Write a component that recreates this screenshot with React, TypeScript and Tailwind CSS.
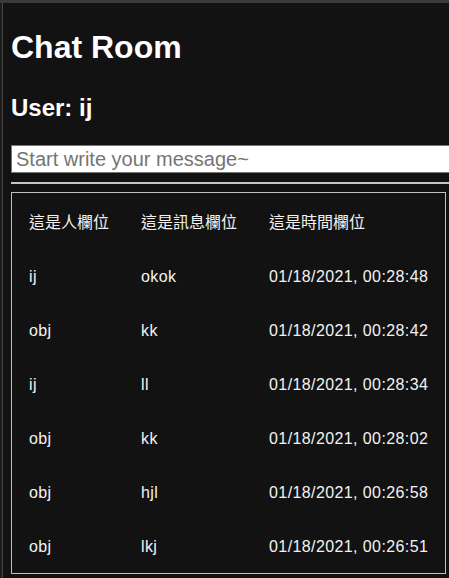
import React from "react";

const rows = [
  ["ij", "okok", "01/18/2021, 00:28:48"],
  ["obj", "kk", "01/18/2021, 00:28:42"],
  ["ij", "ll", "01/18/2021, 00:28:34"],
  ["obj", "kk", "01/18/2021, 00:28:02"],
  ["obj", "hjl", "01/18/2021, 00:26:58"],
  ["obj", "lkj", "01/18/2021, 00:26:51"],
];

export default function App() {
  return (
    <div className="w-[449px] h-[578px] overflow-hidden bg-[#121212] flex flex-col" style={{ fontFamily: '"Liberation Sans", "Noto Sans CJK TC", sans-serif' }}>
      <div className="h-[3px] bg-[#3a3a3d] shrink-0" />
      <div className="flex flex-1 min-h-0">
        <div className="w-[2px] bg-[#1c1c1c] shrink-0" />
        <div className="w-[1px] bg-[#444] shrink-0" />
        <div className="flex-1 min-w-0 pl-[8px] flex flex-col">
          <h1 className="mt-[26px] text-[32px] leading-[37px] font-bold text-white">Chat Room</h1>
          <h2 className="mt-[28px] text-[24px] leading-[28px] font-bold text-white">User: ij</h2>
          <input
            className="mt-[23px] w-[460px] h-[28px] shrink-0 bg-white border border-[#767676] px-[4px] text-[20px] leading-[23px] text-black placeholder:text-[#757575] outline-none"
            placeholder="Start write your message~"
          />
          <div className="mt-[9px] h-[2px] w-[460px] bg-[#c4c4c4] shrink-0" />
          <table className="mt-[8px] w-[434px] shrink-0 border border-[#c0c0c0] border-separate border-spacing-[2px] text-[16px] text-[#f2f2f2]">
            <tbody>
              <tr>
                <td className="h-[52px] pt-[3px] pb-0 px-[15px] whitespace-nowrap">這是人欄位</td>
                <td className="h-[52px] pt-[3px] pb-0 px-[15px] whitespace-nowrap">這是訊息欄位</td>
                <td className="h-[52px] pt-[3px] pb-0 px-[15px] whitespace-nowrap">這是時間欄位</td>
              </tr>
              {rows.map((r, i) => (
                <tr key={i}>
                  <td className="h-[52px] pt-[3px] pb-0 px-[15px] whitespace-nowrap tracking-[0.4px]">{r[0]}</td>
                  <td className="h-[52px] pt-[3px] pb-0 px-[15px] whitespace-nowrap tracking-[0.4px]">{r[1]}</td>
                  <td className="h-[52px] pt-[3px] pb-0 px-[15px] whitespace-nowrap tracking-[0.4px]">{r[2]}</td>
                </tr>
              ))}
            </tbody>
          </table>
        </div>
      </div>
    </div>
  );
}
